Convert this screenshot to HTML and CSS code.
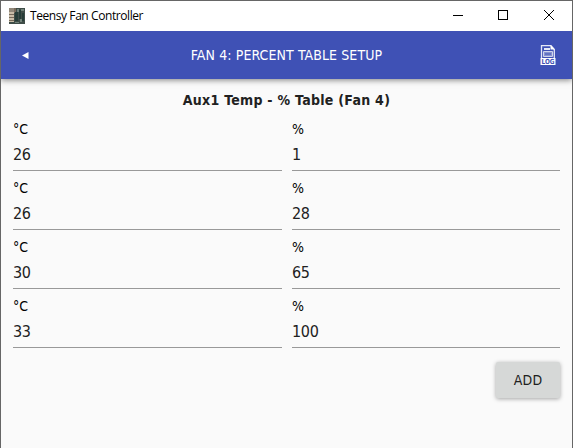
FILE: index.html
```html
<!DOCTYPE html>
<html lang="en">
<head>
<meta charset="utf-8">
<title>Teensy Fan Controller</title>
<link rel="stylesheet" href="styles.css">
</head>
<body>
<div class="window">
  <header class="titlebar">
    <svg class="app-icon" width="16" height="16" viewBox="0 0 16 16" shape-rendering="crispEdges">
      <path fill="#3f4d48" d="M0 0h16v16H0z"/>
      <path fill="#91887a" d="M0 0h5v4H0z"/>
      <path fill="#c9bda8" d="M0 4h5v10H0z"/>
      <path fill="#776b5c" d="M0 6h5v1H0zM0 9h5v1H0zM0 12h5v1H0zM5 0h2v5H5z"/>
      <path fill="#263d38" d="M6 4h3v9H6zM10 2h2v9h-2zM13 5h2v8h-2z"/>
      <path fill="#71827a" d="M8 1h2v3H8zM12 1h3v2h-3zM11 11h2v3h-2zM6 14h4v1H6z"/>
    </svg>
    <span class="app-name">Teensy Fan Controller</span>
    <svg class="controls" width="106" height="12" viewBox="0 0 106 12" fill="none" stroke="#000">
      <path d="M0 5.500h10M45.500 .5h9v9h-9z" shape-rendering="crispEdges"/>
      <path d="M91 0l10 10M101 0L91 10"/>
    </svg>
  </header>
  <div class="appbar">
    <svg class="back" width="7" height="7" viewBox="0 0 7 7"><path d="M6.500 0v7L0 3.500z" fill="#fff"/></svg>
    <h1 class="page-title">FAN 4: PERCENT TABLE SETUP</h1>
    <svg class="log" width="16" height="20" viewBox="0 0 16 20">
      <path d="M1.500 13V.7h9.500l3.300 3.800V13" fill="none" stroke="#e5e8f6" stroke-width="1.300"/>
      <path d="M10.500 0L15 4.500h-4.500z" fill="#fff"/>
      <path d="M4 4h6" stroke="#e5e8f6" stroke-width="2"/>
      <path d="M3.500 6.500h9v5h-9z" fill="#8793cf" stroke="#cfd4ed"/>
      <path d="M5 9h6" stroke="#3f51b5"/>
      <path d="M0.500 13h15v7H.5z" fill="#fff"/>
      <text x="8" y="19" text-anchor="middle" textLength="13" lengthAdjust="spacingAndGlyphs">LOG</text>
    </svg>
  </div>
  <main class="content">
    <h2 class="table-title">Aux1 Temp - % Table (Fan 4)</h2>
    <div class="grid">
      <div class="field"><div class="label">°C</div><div class="value">26</div></div>
      <div class="field"><div class="label">%</div><div class="value">1</div></div>
      <div class="field"><div class="label">°C</div><div class="value">26</div></div>
      <div class="field"><div class="label">%</div><div class="value">28</div></div>
      <div class="field"><div class="label">°C</div><div class="value">30</div></div>
      <div class="field"><div class="label">%</div><div class="value">65</div></div>
      <div class="field"><div class="label">°C</div><div class="value">33</div></div>
      <div class="field"><div class="label">%</div><div class="value">100</div></div>
    </div>
    <button class="add">ADD</button>
  </main>
</div>
</body>
</html>
```
FILE: styles.css
```css
* { box-sizing: border-box; }
body {
  margin: 0;
  font-family: "DejaVu Sans Condensed", "DejaVu Sans", sans-serif;
  font-stretch: condensed;
  color: #212121;
}
.window {
  height: 448px;
  border: 1px solid #666;
  border-bottom: 0;
  background: #fafafa;
  overflow: hidden;
}
.titlebar {
  position: relative;
  z-index: 1;
  display: flex;
  align-items: center;
  height: 30px;
  padding: 0 13px 0 8px;
  background: #fff;
}
.app-name {
  margin-left: 5px;
  font: 12px/28px "Open Sans", sans-serif;
  letter-spacing: -.42px;
  color: #000;
  white-space: nowrap;
}
.controls { margin-left: auto; }
.appbar {
  display: flex;
  align-items: center;
  justify-content: space-between;
  height: 48px;
  padding: 0 16px 0 21px;
  background: #3f51b5;
  box-shadow: 0 1px 6px rgba(0, 0, 0, .5);
}
.page-title {
  margin: 0 0 0 4px;
  font-size: 14px;
  font-weight: 400;
  line-height: 20px;
  letter-spacing: .09px;
  color: #fff;
}
.log text {
  font: bold 7px "DejaVu Sans", sans-serif;
  fill: #3f51b5;
}
.content {
  display: flex;
  flex-direction: column;
  padding: 11px 12px;
}
.table-title {
  margin: 0;
  text-align: center;
  font-size: 14px;
  line-height: 20px;
  letter-spacing: .28px;
}
.grid {
  display: grid;
  grid-template-columns: 269px 268px;
  column-gap: 10px;
  row-gap: 8px;
  margin-top: 10px;
}
.field {
  height: 51px;
  border-bottom: 1px solid #999;
}
.label {
  font-size: 14px;
  line-height: 18px;
  color: #000;
}
.value {
  margin-top: 5px;
  font-size: 16px;
  line-height: 24px;
  letter-spacing: -.3px;
}
.add {
  align-self: flex-end;
  width: 64px;
  height: 36px;
  margin-top: 14px;
  padding: 0;
  border: 0;
  border-radius: 2px;
  background: #d6d8d7;
  box-shadow: 0 1px 4px rgba(0, 0, 0, .35);
  font: 14px/36px "DejaVu Sans Condensed", "DejaVu Sans", sans-serif;
  font-stretch: condensed;
  letter-spacing: .2px;
  color: #212121;
}
```
